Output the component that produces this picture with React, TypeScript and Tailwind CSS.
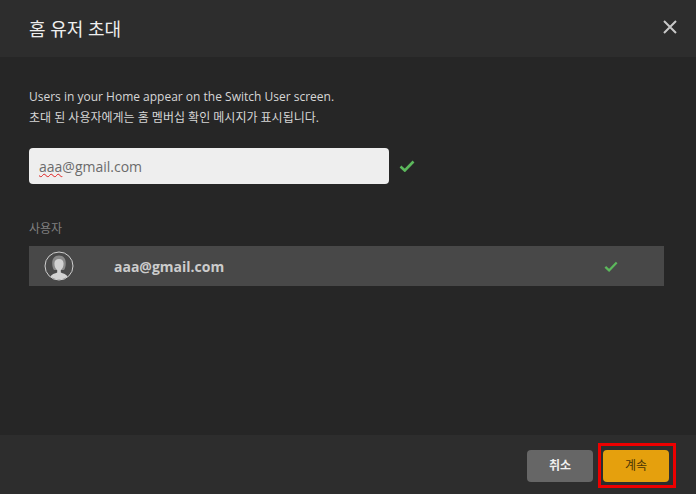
const sans = 'font-["Open_Sans","Noto_Sans_CJK_KR",sans-serif]';

function Check({ className }: { className: string }) {
  return (
    <svg className={className} viewBox="0 0 16 12" fill="none">
      <path d="M1.5 6.5L5.8 10.5L14.5 1.5" stroke="#5cb85c" strokeWidth="2.6" />
    </svg>
  );
}

function Avatar() {
  return (
    <svg className="w-[30px] h-[30px]" viewBox="0 0 30 30">
      <defs>
        <clipPath id="avatar-clip">
          <circle cx="15" cy="15" r="13.5" />
        </clipPath>
      </defs>
      <circle cx="15" cy="15" r="14" fill="#4a4a4a" stroke="#cfcfcf" strokeWidth="1" />
      <g clipPath="url(#avatar-clip)">
        <path d="M15 4.5c-4.6 0-6.8 3.4-6.8 7.5 0 3 .6 5.600 1.800 7h10c1.200-1.400 1.800-4 1.800-7 0-4.100-2.200-7.500-6.800-7.500z" fill="#8a8a8a" />
        <path d="M15 8c-3 0-4.600 2-4.600 4.800 0 3 1.400 5.200 2.800 6.400v2.200c-2.200 1-5 1.400-6.200 3.400v5.600h16v-5.600c-1.200-2-4-2.400-6.200-3.400v-2.200c1.400-1.200 2.800-3.400 2.800-6.400C19.600 10 18 8 15 8z" fill="#d2d2d2" />
      </g>
    </svg>
  );
}

export default function App() {
  return (
    <div className={`w-[696px] h-[494px] flex flex-col bg-[#262626] overflow-hidden ${sans}`}>
      <div className="h-[57px] shrink-0 bg-[#2d2d2d] flex items-center justify-between pl-[29px] pr-[19px]">
        <div className="text-[18px] leading-[52px] h-[52px] text-[#eeeeee]">홈 유저 초대</div>
        <svg className="w-[14px] h-[14px] -mt-[3px]" viewBox="0 0 14 14" fill="none">
          <path d="M1 1L13 13M13 1L1 13" stroke="#c8c8c8" strokeWidth="2" />
        </svg>
      </div>

      <div className="flex-1 px-[29px] pt-[29px]">
        <p className="text-[12px] leading-[21px] text-[#d6d6d6]">
          Users in your Home appear on the Switch User screen.
          <br />
          초대 된 사용자에게는 홈 멤버십 확인 메시지가 표시됩니다.
        </p>

        <div className="mt-[20px] flex items-center">
          <div className="w-[360px] h-[36px] rounded-[4px] bg-[#eeeeee] pl-[10px] flex items-center text-[14px] text-[#6b6b6b]">
            <span className="underline decoration-wavy decoration-[#e02020] decoration-1">aaa</span>
            @gmail.com
          </div>
          <Check className="w-[16px] h-[12px] ml-[10px]" />
        </div>

        <div className="mt-[36px] text-[12px] leading-[18px] text-[#808080]">사용자</div>

        <div className="mt-[8px] w-[635px] h-[40px] bg-[#484848] flex items-center pl-[15px]">
          <Avatar />
          <div className="ml-[40px] text-[14px] font-bold text-[#cccccc]">aaa@gmail.com</div>
          <Check className="w-[14px] h-[11px] ml-[380px]" />
        </div>
      </div>

      <div className="h-[59px] shrink-0 bg-[#2d2d2d] flex items-start justify-end gap-[10px] pt-[15px] pr-[27px]">
        <button className="w-[66px] h-[32px] rounded-[4px] bg-[#666666] text-[12px] font-bold text-[#f0f0f0]">취소</button>
        <div className="relative">
          <button className="w-[66px] h-[32px] rounded-[4px] bg-[#e5a00d] text-[12px] text-[#4a3505]">계속</button>
          <div className="absolute -left-[5px] -top-[7px] w-[78px] h-[45px] border-[3px] border-[#ed0000]" />
        </div>
      </div>
    </div>
  );
}
